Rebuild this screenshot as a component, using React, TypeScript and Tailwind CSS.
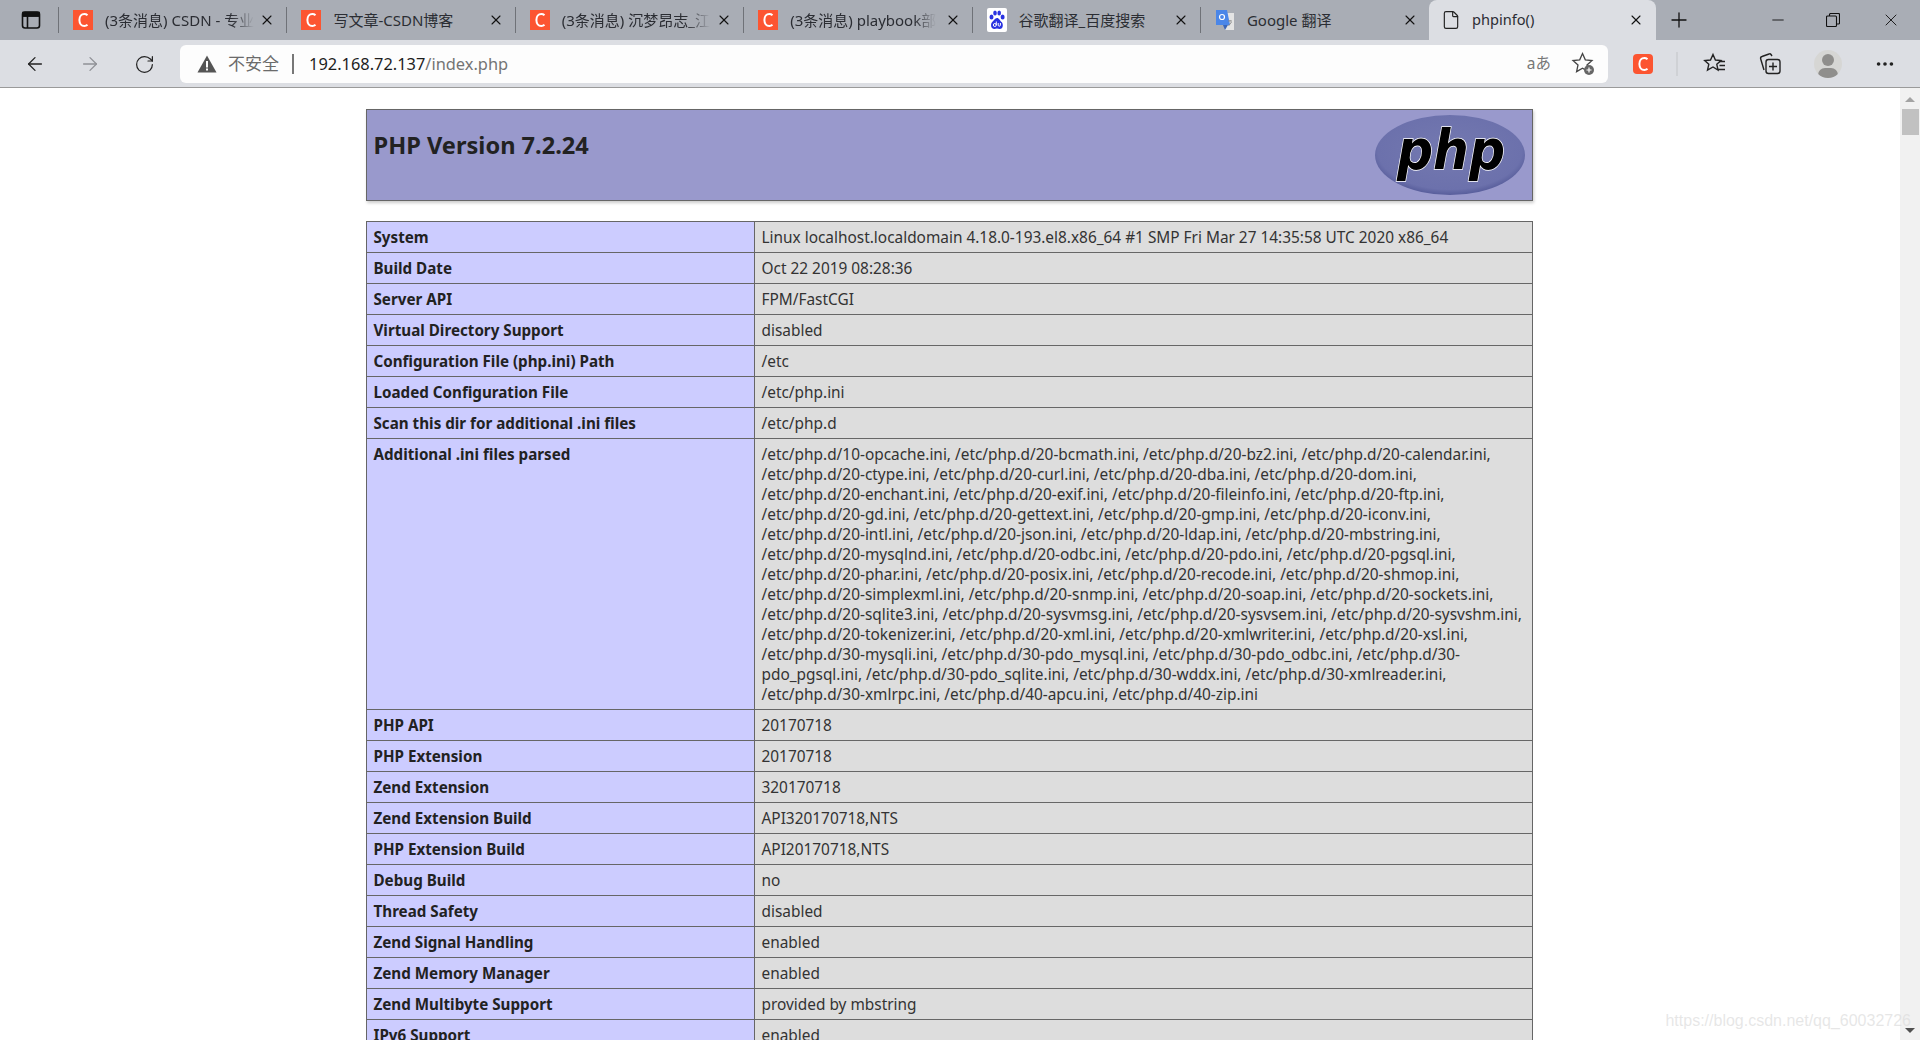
import { ArrowLeft, ArrowRight, RotateCw, X, Plus, Minus, MoreHorizontal, File } from 'lucide-react';

const cjk = "font-['Noto_Sans','Noto_Sans_CJK_SC',sans-serif]";

function CsdnIcon({ size = 20 }: { size?: number }) {
  return (
    <svg width={size} height={size} viewBox="0 0 20 20" className="shrink-0">
      <rect width="20" height="20" fill="#fc5531" />
      <path d="M14.5 5.2C13.6 4.4 12.5 4 11.3 4 8.4 4 6.4 6.6 6.4 10s2 6 4.9 6c1.2 0 2.3-.4 3.2-1.2" fill="none" stroke="#fff" strokeWidth="2" />
    </svg>
  );
}

function BaiduIcon() {
  return (
    <svg width="20" height="24" viewBox="0 0 20 24" className="shrink-0">
      <rect width="20" height="24" rx="2" fill="#fff" />
      <g fill="#2932e1">
        <ellipse cx="4.500" cy="9" rx="2" ry="2.600" />
        <ellipse cx="8" cy="5" rx="1.800" ry="2.500" />
        <ellipse cx="12.200" cy="5" rx="1.800" ry="2.500" />
        <ellipse cx="15.600" cy="9" rx="2" ry="2.600" />
        <path d="M10 10c-2.200 0-3 2.600-4.800 4-1.800 1.500-1.800 7 2.200 7 1 0 1.700-.4 2.600-.4s1.600.4 2.600.4c4 0 3.800-5.400 2-7C12.800 12.600 12.200 10 10 10z" />
      </g>
      <circle cx="7.800" cy="17" r="1.500" fill="none" stroke="#fff" strokeWidth="1" />
      <path d="M9.300 13.500V17M11.200 15v2.200c0 1.300 2.200 1.300 2.200 0V15" fill="none" stroke="#fff" strokeWidth="1" />
    </svg>
  );
}

function TranslateIcon() {
  return (
    <svg width="20" height="24" viewBox="0 0 20 24" className="shrink-0">
      <path d="M8 5h11v17H10z" fill="#e4e4e4" />
      <path d="M1 2h11l3 15H1z" fill="#4a86e8" />
      <path d="M8 17l2 5 3-5z" fill="#3a66b8" />
      <circle cx="7" cy="9" r="2.500" fill="none" stroke="#fff" strokeWidth="1.200" />
      <path d="M13 13h4M15 12v1M13.500 18l3-4" stroke="#888" strokeWidth="0.900" fill="none" />
    </svg>
  );
}

interface TabProps {
  title: string;
  icon: React.ReactNode;
  faded?: boolean;
}

function Tab({ title, icon, faded }: TabProps) {
  return (
    <div className="relative flex h-10 w-[228.4px] shrink-0 items-center pl-[14px] border-r border-[#6f7278] [border-image:linear-gradient(transparent_8px,#6f7278_8px,#6f7278_32px,transparent_32px)_1]">
      {icon}
      <span
        className={`ml-3 whitespace-nowrap text-[15px] text-[#2b2d33] ${faded ? '[mask-image:linear-gradient(to_right,black_85%,transparent)]' : ''}`}
      >
        {title}
      </span>
      <X size={16} strokeWidth={1.6} className="absolute right-[11px] text-[#111]" />
    </div>
  );
}

const rows: [string, string[]][] = [
  ['System', ['Linux localhost.localdomain 4.18.0-193.el8.x86_64 #1 SMP Fri Mar 27 14:35:58 UTC 2020 x86_64']],
  ['Build Date', ['Oct 22 2019 08:28:36']],
  ['Server API', ['FPM/FastCGI']],
  ['Virtual Directory Support', ['disabled']],
  ['Configuration File (php.ini) Path', ['/etc']],
  ['Loaded Configuration File', ['/etc/php.ini']],
  ['Scan this dir for additional .ini files', ['/etc/php.d']],
  [
    'Additional .ini files parsed',
    [
      '/etc/php.d/10-opcache.ini, /etc/php.d/20-bcmath.ini, /etc/php.d/20-bz2.ini, /etc/php.d/20-calendar.ini,',
      '/etc/php.d/20-ctype.ini, /etc/php.d/20-curl.ini, /etc/php.d/20-dba.ini, /etc/php.d/20-dom.ini,',
      '/etc/php.d/20-enchant.ini, /etc/php.d/20-exif.ini, /etc/php.d/20-fileinfo.ini, /etc/php.d/20-ftp.ini,',
      '/etc/php.d/20-gd.ini, /etc/php.d/20-gettext.ini, /etc/php.d/20-gmp.ini, /etc/php.d/20-iconv.ini,',
      '/etc/php.d/20-intl.ini, /etc/php.d/20-json.ini, /etc/php.d/20-ldap.ini, /etc/php.d/20-mbstring.ini,',
      '/etc/php.d/20-mysqlnd.ini, /etc/php.d/20-odbc.ini, /etc/php.d/20-pdo.ini, /etc/php.d/20-pgsql.ini,',
      '/etc/php.d/20-phar.ini, /etc/php.d/20-posix.ini, /etc/php.d/20-recode.ini, /etc/php.d/20-shmop.ini,',
      '/etc/php.d/20-simplexml.ini, /etc/php.d/20-snmp.ini, /etc/php.d/20-soap.ini, /etc/php.d/20-sockets.ini,',
      '/etc/php.d/20-sqlite3.ini, /etc/php.d/20-sysvmsg.ini, /etc/php.d/20-sysvsem.ini, /etc/php.d/20-sysvshm.ini,',
      '/etc/php.d/20-tokenizer.ini, /etc/php.d/20-xml.ini, /etc/php.d/20-xmlwriter.ini, /etc/php.d/20-xsl.ini,',
      '/etc/php.d/30-mysqli.ini, /etc/php.d/30-pdo_mysql.ini, /etc/php.d/30-pdo_odbc.ini, /etc/php.d/30-',
      'pdo_pgsql.ini, /etc/php.d/30-pdo_sqlite.ini, /etc/php.d/30-wddx.ini, /etc/php.d/30-xmlreader.ini,',
      '/etc/php.d/30-xmlrpc.ini, /etc/php.d/40-apcu.ini, /etc/php.d/40-zip.ini',
    ],
  ],
  ['PHP API', ['20170718']],
  ['PHP Extension', ['20170718']],
  ['Zend Extension', ['320170718']],
  ['Zend Extension Build', ['API320170718,NTS']],
  ['PHP Extension Build', ['API20170718,NTS']],
  ['Debug Build', ['no']],
  ['Thread Safety', ['disabled']],
  ['Zend Signal Handling', ['enabled']],
  ['Zend Memory Manager', ['enabled']],
  ['Zend Multibyte Support', ['provided by mbstring']],
  ['IPv6 Support', ['enabled']],
];

export default function App() {
  return (
    <div className={`relative flex h-[1040px] w-[1920px] flex-col overflow-hidden bg-white ${cjk}`}>
      {/* Tab strip */}
      <div className="flex h-10 shrink-0 items-center bg-[#a9adb5]">
        <div className="flex h-10 w-[59px] shrink-0 items-center justify-center border-r border-[#6f7278] [border-image:linear-gradient(transparent_8px,#6f7278_8px,#6f7278_32px,transparent_32px)_1]">
          <svg width="20" height="20" viewBox="0 0 20 20" fill="none" stroke="#111" strokeWidth="1.600" className="ml-[3px]">
            <rect x="1.500" y="2" width="17" height="16" rx="2.500" />
            <path d="M1.500 6h17M6.500 6v12" />
            <path d="M2 2.500h16v3.500H2z" fill="#111" />
          </svg>
        </div>
        <Tab title="(3条消息) CSDN - 专业" icon={<CsdnIcon />} faded />
        <Tab title="写文章-CSDN博客" icon={<CsdnIcon />} />
        <Tab title="(3条消息) 沉梦昂志_江" icon={<CsdnIcon />} faded />
        <Tab title="(3条消息) playbook部" icon={<CsdnIcon />} faded />
        <Tab title="谷歌翻译_百度搜索" icon={<BaiduIcon />} />
        <div className="relative flex h-10 w-[228px] shrink-0 items-center pl-[14px]">
          <TranslateIcon />
          <span className="ml-3 text-[15px] text-[#2b2d33]">Google 翻译</span>
          <X size={16} strokeWidth={1.6} className="absolute right-[11px] text-[#111]" />
        </div>
        <div className="relative flex h-10 w-[227px] shrink-0 items-center rounded-t-lg bg-[#dcdee3] pl-[12px]">
          <File size={20} strokeWidth={1.4} className="text-[#222]" />
          <span className="ml-[11px] text-[14.6px] text-[#2b2d33]">phpinfo()</span>
          <X size={16} strokeWidth={1.6} className="absolute right-[12px] text-[#111]" />
        </div>
        <Plus size={24} strokeWidth={1.3} className="ml-[11px] text-[#111]" />
        <div className="ml-auto flex items-center">
          <Minus size={18} strokeWidth={1.2} className="mr-[39px] text-[#111]" />
          <svg width="14" height="14" viewBox="0 0 14 14" fill="none" stroke="#111" strokeWidth="1.100" className="mr-[41px]">
            <rect x="0.500" y="3" width="10" height="10.500" rx="1" />
            <path d="M3.500 3V1.500a1 1 0 0 1 1-1h8a1 1 0 0 1 1 1V10a1 1 0 0 1-1 1h-2" />
          </svg>
          <X size={20} strokeWidth={1.1} className="mr-[19px] text-[#111]" />
        </div>
      </div>

      {/* Toolbar */}
      <div className="flex h-[48px] shrink-0 items-center border-b border-[#9a9a9a] bg-[#dcdee3] pt-px">
        <div className="flex w-[180px] shrink-0 items-center pl-[24px]">
          <ArrowLeft size={22} strokeWidth={1.4} className="text-[#222]" />
          <ArrowRight size={22} strokeWidth={1.4} className="ml-[33px] text-[#8f9196]" />
          <RotateCw size={21} strokeWidth={1.4} className="ml-[33px] text-[#222]" />
        </div>
        <div className="flex h-[38px] w-[1428px] shrink-0 items-center rounded-md bg-[#fdfdfd] pl-[17px]">
          <svg width="20" height="18" viewBox="0 0 20 18" className="shrink-0">
            <path d="M10 0.500 19.500 17.500H0.500z" fill="#555" />
            <rect x="9" y="6" width="2" height="6.500" fill="#fff" />
            <rect x="9" y="13.500" width="2" height="2" fill="#fff" />
          </svg>
          <span className="ml-[11px] text-[17px] text-[#6b6b6b]">不安全</span>
          <span className="ml-[13px] h-[20px] w-[2px] bg-[#777]" />
          <span className="ml-[15px] text-[16.4px] text-[#1d1d1d]">
            192.168.72.137<span className="text-[#747474]">/index.php</span>
          </span>
          <span className="ml-auto text-[15.5px] text-[#777]">aあ</span>
          <svg width="26" height="26" viewBox="0 0 26 26" fill="none" className="ml-[20px] mr-[11px]">
            <path d="M11.500 2.500l2.800 6.300 6.700.700-5 4.500 1.400 6.600-5.900-3.400-5.900 3.400 1.400-6.600-5-4.500 6.700-.700z" stroke="#444" strokeWidth="1.300" />
            <circle cx="18" cy="19" r="5" fill="#666" />
            <path d="M18 16.500v5M15.500 19h5" stroke="#fff" strokeWidth="1.200" />
          </svg>
        </div>
        <div className="ml-[25px]">
          <div className="overflow-hidden rounded-[4px]">
            <CsdnIcon size={20} />
          </div>
        </div>
        <span className="ml-[23px] h-6 w-[2px] bg-[#cfd1d5]" />
        <svg width="24" height="24" viewBox="0 0 24 24" fill="none" stroke="#222" strokeWidth="1.400" className="ml-[25px]">
          <path d="M10 2.500l2.400 5.500 5.600.500-4.200 3.800 1.200 5.700-5-3-5.500 3.200 1.300-5.900L1.700 8.500l5.800-.500z" />
          <path d="M16 9.500h6M16.500 13.500h5.500M15 17.500h7" />
        </svg>
        <svg width="24" height="24" viewBox="0 0 24 24" fill="none" stroke="#222" strokeWidth="1.400" className="ml-[31px]">
          <rect x="8" y="7.500" width="14" height="14" rx="2.500" />
          <path d="M15 10.500v8M11 14.500h8" />
          <path d="M14 4l-1-1.500a1.500 1.500 0 0 0-2-.5L4 4.500a2 2 0 0 0-1.300 2.500L6 18" />
        </svg>
        <div className="relative ml-[32px] size-7 overflow-hidden rounded-full bg-[#d6d6d4]">
          <div className="absolute left-[8px] top-[4px] h-[12px] w-[12px] rounded-full bg-[#8f8e8c]" />
          <div className="absolute left-[4px] top-[18px] h-[14px] w-[20px] rounded-full bg-[#8f8e8c]" />
        </div>
        <MoreHorizontal size={22} strokeWidth={2} className="ml-[32px] text-[#222]" />
      </div>

      {/* Page */}
      <div className="flex min-h-0 flex-1">
        <div className="min-w-0 flex-1 overflow-hidden pl-[366px] pt-[21px]">
          <div className="w-[1167px]">
            <div className="flex h-[92px] items-start justify-between border border-[#666] bg-[#9999cc] pl-[6.5px] pr-[6px] shadow-[1px_2px_3px_#ccc]">
              <h1 className="mt-[18px] text-[23.6px] font-bold leading-[34px] text-[#222]">PHP Version 7.2.24</h1>
              <svg width="152" height="82" viewBox="0 0 152 82" className="mt-[4px]">
                <defs>
                  <radialGradient id="phpOval" cx="50%" cy="45%" r="60%">
                    <stop offset="0%" stopColor="#7479b0" />
                    <stop offset="80%" stopColor="#6c71ac" />
                    <stop offset="100%" stopColor="#494f8f" />
                  </radialGradient>
                </defs>
                <ellipse cx="76" cy="41" rx="75" ry="40" fill="url(#phpOval)" />
                <text
                  x="77"
                  y="55"
                  textAnchor="middle"
                  textLength="108"
                  lengthAdjust="spacingAndGlyphs"
                  fontFamily="'DejaVu Sans', sans-serif"
                  fontSize="56"
                  fontWeight="700"
                  fontStyle="italic"
                  fill="#000"
                  stroke="#fff"
                  strokeWidth="1.500"
                  paintOrder="stroke"
                >
                  php
                </text>
              </svg>
            </div>

            <table className="mt-[20px] w-[1167px] table-fixed border-collapse text-[15.4px] leading-[20px] text-[#222]">
              <tbody>
                {rows.map(([label, lines]) => (
                  <tr key={label}>
                    <td className="w-[388px] border border-[#666] bg-[#ccccff] px-[6.5px] py-[5px] align-top text-[15.2px] font-bold">{label}</td>
                    <td className="border border-[#666] bg-[#dddddd] px-[6.5px] pt-[6px] pb-[4px] align-top text-[#333]">
                      {lines.map((line) => (
                        <div key={line} className="whitespace-nowrap">
                          {line}
                        </div>
                      ))}
                    </td>
                  </tr>
                ))}
              </tbody>
            </table>
          </div>
        </div>

        {/* Scrollbar */}
        <div className="flex w-5 shrink-0 flex-col items-center bg-[#f1f1f1]">
          <div className="mt-[9px] size-0 border-x-[5px] border-b-[5px] border-x-transparent border-b-[#a3a3a3]" />
          <div className="mt-[7px] h-[26px] w-[17px] bg-[#c1c1c1]" />
          <div className="mt-auto mb-[7px] size-0 border-x-[5px] border-t-[5px] border-x-transparent border-t-[#505050]" />
        </div>
      </div>

      {/* Watermark */}
      <span className="absolute bottom-[7px] right-[9px] font-['Liberation_Sans',sans-serif] text-[16px] text-[#dcdcdc]/70">
        https://blog.csdn.net/qq_60032726
      </span>
    </div>
  );
}
